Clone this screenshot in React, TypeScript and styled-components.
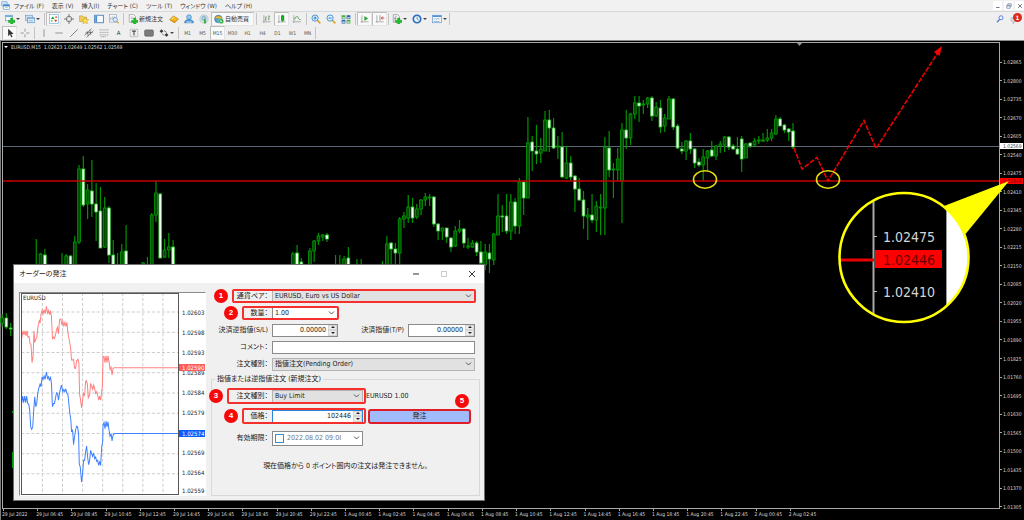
import React from "react";
import styled, { createGlobalStyle, css } from "styled-components";

const UI_FONT = `"DejaVu Sans Condensed", "DejaVu Sans", "Noto Sans CJK JP", sans-serif`;

const GlobalStyle = createGlobalStyle`
  *, *::before, *::after { box-sizing: border-box; }
  body { margin: 0; background: #000; font-family: ${UI_FONT}; font-feature-settings: "palt"; }
  button, input, select { font-family: inherit; font-feature-settings: inherit; color: inherit; margin: 0; }
`;

/* ---------- shell ---------- */

const Shell = styled.div`
  display: flex;
  flex-direction: column;
  min-height: 100vh;
  color: #333;
`;

const MenuBar = styled.header`
  display: flex;
  align-items: center;
  height: 12px;
  padding: 0 0 0 1px;
  background: #f1f1f1;
  border-bottom: 1px solid #d8d8d8;
`;

const MenuList = styled.nav`
  display: flex;
  gap: 8px;
  margin-left: 4px;
  flex: 1;
`;

const MenuItem = styled.button`
  border: 0;
  padding: 0;
  background: none;
  font-size: 6px;
  line-height: 10px;
  white-space: nowrap;
`;

const WindowButtons = styled.div`
  display: flex;
  gap: 2px;
`;

const WindowButton = styled.button`
  display: flex;
  align-items: center;
  justify-content: center;
  width: 9px;
  height: 9px;
  padding: 0;
  border: 0;
  background: #fff;
`;

const ToolBar = styled.div`
  display: flex;
  align-items: stretch;
  height: 14px;
  padding-left: 2px;
  background: #efefef;
`;

const ToolEnd = styled.div`
  display: flex;
  align-items: center;
  gap: 6px;
  margin-left: auto;
`;

const Separator = styled.span<{ $w: number }>`
  width: ${(p) => p.$w}px;
  flex: none;
  margin: 1px 0;
  background: linear-gradient(#c4c4c4, #c4c4c4) center / 1px 100% no-repeat;
`;

const ToolButton = styled.button<{ $w?: number; $pressed?: boolean }>`
  display: flex;
  align-items: center;
  justify-content: ${(p) => (p.$w ? "flex-start" : "center")};
  gap: 1px;
  width: ${(p) => p.$w ?? 15}px;
  flex: none;
  padding: 0 ${(p) => (p.$w ? 2 : 0)}px;
  border: 1px solid transparent;
  background: none;
  font-size: 6px;
  line-height: 10px;
  white-space: nowrap;
  ${(p) =>
    p.$pressed &&
    css`
      background: #f9f9f9;
      border-color: #bdbdbd #e4e4e4 #e4e4e4 #bdbdbd;
    `}
`;

const PeriodButton = styled(ToolButton)`
  font-size: 5px;
  color: #555;
`;

const Caret = styled.span`
  border: 2px solid transparent;
  border-top-color: #444;
  border-bottom: 0;
`;

const IconSvg = styled.svg<{ $size?: number }>`
  display: block;
  flex: none;
  width: ${(p) => p.$size ?? 10}px;
  height: ${(p) => p.$size ?? 10}px;
`;

const Notice = styled.button`
  position: relative;
  width: 14px;
  height: 12px;
  padding: 0;
  border: 0;
  background: none;
`;

const NoticeCount = styled.span`
  position: absolute;
  top: 0;
  right: 2px;
  width: 9px;
  height: 9px;
  border-radius: 50%;
  background: #d9291c;
  color: #fff;
  font-size: 6px;
  line-height: 9px;
  font-weight: bold;
  text-align: center;
`;

/* ---------- chart ---------- */

const ChartWindow = styled.main`
  position: relative;
  flex: 1;
  display: grid;
  grid-template-columns: 1fr 24px;
  grid-template-rows: auto 1fr;
  padding: 1px 0 0 1px;
  border-top: 1px solid #8c8c8c;
  border-left: 1px solid #7c7c7c;
  background: #000;
  color: #dcdcdc;
  font-size: 5px;
  line-height: 6px;
`;

const Plot = styled.section`
  position: relative;
  z-index: 1;
  border: 1px solid #a8a8a8;
`;

const PlotSvg = styled.svg`
  display: block;
  width: 100%;
  overflow: visible;
`;

const PlotTitle = styled.h1`
  position: absolute;
  top: 1px;
  left: 1px;
  display: flex;
  align-items: center;
  gap: 3px;
  margin: 0;
  font-size: 5px;
  font-weight: normal;
  line-height: 6px;
  white-space: pre;
  ${Caret} { border-top-color: #fff; }
`;

const PriceAxis = styled.ol`
  position: relative;
  grid-row: 1 / 3;
  grid-column: 2;
  display: flex;
  flex-direction: column;
  justify-content: space-between;
  margin: 0;
  padding: 17px 0 10px;
  list-style: none;
`;

const PriceTick = styled.li`
  display: flex;
  align-items: center;
  gap: 1px;
  &::before {
    content: "";
    width: 2px;
    height: 1px;
    background: #a8a8a8;
  }
`;

const PriceTag = styled.li<{ $bg: string; $fg: string }>`
  position: absolute;
  left: 0;
  width: 23px;
  padding-left: 3px;
  transform: translateY(-50%);
  background: ${(p) => p.$bg};
  color: ${(p) => p.$fg};
`;

const TimeAxis = styled.ol`
  display: grid;
  grid-template-columns: repeat(24, 1fr);
  margin: 0;
  padding: 0 177px 0 0;
  list-style: none;
`;

const TimeTick = styled.li`
  white-space: nowrap;
  &::before {
    content: "";
    display: block;
    width: 1px;
    height: 2px;
    margin-left: 1px;
    background: #a8a8a8;
  }
`;

/* ---------- order dialog ---------- */

const Dialog = styled.section`
  position: absolute;
  z-index: 2;
  left: 12px;
  bottom: 19px;
  width: 472px;
  border: 1px solid #6f6f6f;
  background: #f0f0f0;
  color: #222;
  font-size: 7px;
  line-height: 8px;
`;

const DialogBar = styled.header`
  display: flex;
  align-items: center;
  height: 18px;
  padding: 0 8px 0 5px;
  background: #fff;
`;

const DialogTitle = styled.h2`
  flex: 1;
  margin: 0;
  font-size: 7px;
  font-weight: normal;
  line-height: 8px;
`;

const DialogButton = styled.button`
  display: flex;
  justify-content: center;
  width: 8px;
  margin-left: 20px;
  padding: 0;
  border: 0;
  background: none;
`;

const DialogBody = styled.div`
  display: flex;
  gap: 5px;
  padding: 6px 4px 4px 5px;
`;

const TickPanel = styled.div`
  position: relative;
  display: flex;
  flex: none;
  width: 187px;
  margin-top: 3px;
  border: 1px solid #fff;
  border-top-color: #8a8a8a;
  border-left-color: #8a8a8a;
  background: #fff;
`;

const TickPlot = styled.div`
  position: relative;
  flex: 1;
  margin: 0 0 0 1px;
  border: 1px solid #555;
`;

const TickSvg = styled.svg`
  display: block;
  width: 100%;
`;

const TickName = styled.span`
  position: absolute;
  top: 0;
  left: 1px;
  font-size: 6px;
`;

const TickScale = styled.ol`
  width: 26px;
  margin: 0;
  padding: 10px 0 0;
  list-style: none;
  font-size: 6px;
  line-height: 20px;
`;

const TickLevel = styled.li<{ $last?: boolean }>`
  padding-left: 3px;
  ${(p) =>
    p.$last &&
    css`
      padding-top: 4px;
      line-height: 8px;
    `}
`;

const QuoteTag = styled.span<{ $top: number; $bg: string }>`
  position: absolute;
  top: ${(p) => p.$top}px;
  right: 0;
  width: 26px;
  padding-left: 3px;
  background: ${(p) => p.$bg};
  color: #fff;
  font-size: 6px;
  line-height: 7px;
`;

const Form = styled.form`
  display: flex;
  flex: 1;
  flex-direction: column;
  gap: 3px;
  min-width: 0;
`;

const Row = styled.div<{ $h?: number }>`
  position: relative;
  display: flex;
  align-items: center;
  flex: none;
  height: ${(p) => p.$h ?? 14}px;
  padding-right: 5px;
`;

const Label = styled.label<{ $w?: number }>`
  width: ${(p) => p.$w ?? 61}px;
  flex: none;
  padding-right: 4px;
  text-align: right;
  white-space: nowrap;
`;

const Mark = styled.span<{ $left: number; $width: number }>`
  position: absolute;
  z-index: 1;
  top: 0;
  bottom: 0;
  left: ${(p) => p.$left}px;
  width: ${(p) => p.$width}px;
  border: 2px solid #f5302c;
  border-radius: 2px;
  pointer-events: none;
`;

const Badge = styled.b<{ $corner?: boolean }>`
  position: absolute;
  left: -20px;
  top: calc(50% - 7px);
  width: 14px;
  height: 14px;
  border-radius: 50%;
  background: #f80808;
  color: #fff;
  font: bold 8px/14px "Liberation Sans", Arial, sans-serif;
  text-align: center;
  ${(p) =>
    p.$corner &&
    css`
      left: auto;
      right: 0;
      top: -17px;
    `}
`;

const Field = styled.div<{ $w?: number; $tone?: "grey" | "focus" }>`
  display: flex;
  align-items: center;
  flex: ${(p) => (p.$w ? "none" : "1")};
  width: ${(p) => (p.$w ? p.$w + "px" : "auto")};
  min-width: 0;
  height: 13px;
  border: 1px solid ${(p) => (p.$tone === "focus" ? "#2a86d8" : p.$tone === "grey" ? "#b4b4b4" : "#8a8a8a")};
  background: ${(p) => (p.$tone === "grey" ? "#e1e1e1" : "#fff")};
  position: relative;
`;

const DateField = styled(Field)`
  height: 15px;
  padding-right: 19px;
`;

const Input = styled.input<{ $right?: boolean; $muted?: boolean }>`
  flex: 1;
  width: 0;
  min-width: 0;
  height: 100%;
  padding: 0 2px;
  border: 0;
  outline: 0;
  background: none;
  font-size: 7px;
  line-height: 8px;
  text-align: ${(p) => (p.$right ? "right" : "left")};
  ${(p) => p.$muted && "color: #777;"}
`;

const Select = styled.select`
  appearance: none;
  width: 100%;
  height: 100%;
  padding: 0 12px 0 2px;
  border: 0;
  outline: 0;
  background: none;
  font-size: 7px;
  line-height: 8px;
`;

const Chevron = styled.svg`
  position: absolute;
  right: 2px;
  top: calc(50% - 2px);
  width: 7px;
  height: 4px;
  fill: none;
  stroke: #555;
  pointer-events: none;
`;

const Stepper = styled.span`
  display: flex;
  flex-direction: column;
  flex: none;
  width: 9px;
  height: 100%;
  background: #ececec;
`;

const Step = styled.button`
  display: flex;
  align-items: center;
  justify-content: center;
  flex: 1;
  padding: 0;
  border: 1px solid #d4d4d4;
  background: none;
`;

const StepArrow = styled.svg`
  display: block;
  flex: none;
  width: 4px;
  height: 2px;
  fill: #222;
`;

const Group = styled.fieldset`
  display: flex;
  flex: 1;
  flex-direction: column;
  gap: 4px;
  min-width: 0;
  margin: 1px 0 0;
  padding: 5px 0 0;
  border: 1px solid #d8d8d8;
`;

const Legend = styled.legend`
  margin-left: 3px;
  padding: 0 2px;
`;

const Check = styled.input`
  appearance: none;
  width: 9px;
  height: 9px;
  flex: none;
  margin: 0 1px 0 2px;
  border: 1px solid #3c8ad0;
  background: #fff;
`;

const Summary = styled.span`
  padding-left: 3px;
`;

const Submit = styled.button`
  position: relative;
  flex: 1;
  height: 15px;
  margin: 0 3px 0 5px;
  padding: 0;
  border: 2px solid #e01c28;
  border-radius: 3px;
  background: #a0bcfc;
  font-size: 7px;
  line-height: 8px;
`;

const Hint = styled.p`
  margin: 10px 0 0;
  text-align: center;
`;

/* ---------- data ---------- */

const PRICES = Array.from({ length: 25 }, (_, i) => ((102865 - 65 * i) / 100000).toFixed(5));

const TIMES = [
  "29 Jul 2022",
  ...["06", "08", "10", "12", "14", "16", "18", "20", "22"].map((h) => `29 Jul ${h}:45`),
  ...["00", "02", "04", "06", "08", "10", "12", "14", "16", "18", "20", "22"].map((h) => `1 Aug ${h}:45`),
  "2 Aug 00:45",
  "2 Aug 02:45",
];

// index, high, low, body top, body bottom, direction (1 = up, 0 = down)
type Candle = [number, number, number, number, number, 0 | 1];
const CANDLES: Candle[] = [
  [-8, 314, 327, 318, 323, 1], [-7, 313, 329, 318, 327, 0], [-6, 323, 336, 328, 329, 0],
  [0, 239, 270, 266, 270, 1], [1, 253, 270, 254, 270, 1], [2, 249, 270, 255, 270, 0],
  [6, 253, 270, 266, 270, 1], [7, 254, 270, 256, 270, 1], [8, 255, 270, 256, 270, 0],
  [9, 236, 270, 242, 270, 1], [10, 165, 244, 169, 242, 1], [11, 156, 207, 169, 205, 0],
  [12, 184, 219, 190, 204, 1], [13, 160, 217, 191, 204, 0], [14, 183, 241, 204, 212, 0],
  [15, 187, 248, 211, 248, 0], [16, 197, 248, 208, 247, 1], [17, 206, 263, 208, 255, 0],
  [18, 240, 270, 255, 270, 0], [19, 253, 270, 266, 270, 1], [20, 244, 270, 252, 270, 1],
  [21, 225, 270, 251, 270, 0], [25, 262, 270, 263, 270, 1], [26, 257, 270, 266, 270, 1],
  [27, 213, 270, 215, 270, 1], [28, 181, 222, 193, 215, 1], [29, 193, 258, 194, 258, 0],
  [30, 239, 258, 250, 257, 1], [31, 233, 258, 247, 250, 1], [32, 240, 270, 247, 270, 0],
  [60, 252, 270, 254, 270, 1], [61, 245, 270, 253, 270, 0], [62, 258, 270, 262, 270, 0],
  [64, 248, 270, 251, 270, 1], [65, 240, 262, 241, 251, 1], [66, 233, 245, 236, 241, 1],
  [67, 234, 241, 235, 237, 1], [68, 233, 242, 235, 239, 0], [70, 255, 270, 266, 270, 1],
  [71, 255, 270, 266, 270, 1], [72, 256, 270, 259, 270, 1], [73, 247, 270, 258, 270, 0],
  [75, 259, 270, 266, 270, 1], [76, 259, 270, 266, 270, 1], [81, 261, 270, 266, 270, 1],
  [82, 236, 270, 244, 270, 1], [83, 242, 270, 243, 249, 0], [84, 243, 270, 249, 253, 0],
  [85, 217, 270, 219, 253, 1], [86, 212, 228, 216, 219, 1], [87, 195, 223, 207, 218, 1],
  [88, 198, 223, 207, 218, 0], [89, 204, 219, 209, 217, 1], [90, 199, 215, 200, 209, 1],
  [91, 193, 206, 197, 200, 1], [92, 194, 206, 197, 198, 1], [93, 196, 227, 197, 224, 0],
  [94, 223, 240, 224, 231, 0], [95, 228, 240, 228, 231, 1], [96, 228, 243, 228, 237, 0],
  [97, 237, 252, 238, 247, 0], [98, 226, 247, 231, 246, 1], [99, 220, 233, 229, 231, 1],
  [100, 228, 248, 229, 243, 0], [101, 238, 249, 246, 247, 1], [102, 240, 248, 243, 247, 1],
  [103, 241, 256, 243, 252, 0], [104, 241, 268, 252, 263, 0], [105, 244, 270, 252, 265, 1],
  [106, 244, 273, 253, 259, 0], [107, 233, 265, 234, 260, 1], [108, 194, 235, 216, 235, 1],
  [109, 205, 232, 216, 217, 0], [110, 194, 234, 216, 231, 0], [111, 194, 240, 202, 231, 1],
  [112, 198, 234, 202, 226, 0], [113, 178, 234, 182, 226, 1], [114, 182, 215, 182, 198, 0],
  [115, 117, 198, 143, 198, 1], [116, 136, 171, 142, 151, 0], [117, 125, 164, 151, 154, 0],
  [118, 138, 163, 149, 153, 1], [119, 111, 151, 120, 151, 1], [120, 110, 152, 120, 128, 0],
  [121, 118, 149, 128, 148, 0], [122, 136, 159, 146, 147, 1], [123, 132, 178, 147, 177, 0],
  [124, 146, 179, 163, 178, 1], [125, 156, 180, 163, 177, 0], [126, 175, 212, 176, 189, 0],
  [127, 178, 201, 189, 200, 0], [128, 191, 229, 200, 216, 0], [129, 208, 240, 215, 217, 1],
  [130, 194, 223, 215, 220, 0], [131, 201, 232, 206, 220, 1], [132, 194, 235, 207, 208, 1],
  [133, 137, 235, 147, 208, 1], [134, 131, 177, 148, 170, 0], [135, 163, 198, 169, 170, 1],
  [136, 148, 181, 159, 170, 1], [137, 123, 223, 130, 181, 1], [138, 110, 149, 130, 138, 0],
  [139, 113, 145, 114, 138, 1], [140, 96, 119, 103, 114, 1], [141, 96, 122, 103, 106, 0],
  [142, 100, 114, 104, 105, 1], [143, 97, 108, 98, 104, 1], [144, 96, 121, 98, 116, 0],
  [145, 102, 117, 107, 116, 1], [146, 100, 133, 108, 127, 0], [147, 114, 132, 118, 126, 1],
  [148, 96, 119, 99, 119, 1], [149, 98, 130, 99, 127, 0], [150, 124, 149, 126, 148, 0],
  [151, 142, 154, 149, 151, 0], [152, 140, 160, 141, 151, 1], [153, 133, 154, 141, 149, 0],
  [154, 148, 168, 149, 163, 0], [155, 158, 167, 162, 165, 0], [156, 149, 181, 157, 165, 1],
  [157, 150, 171, 151, 158, 1], [158, 141, 157, 150, 156, 0], [159, 145, 160, 146, 156, 1],
  [160, 141, 153, 144, 146, 1], [161, 136, 152, 137, 145, 1], [162, 136, 150, 137, 147, 0],
  [163, 144, 150, 146, 149, 0], [164, 137, 155, 149, 154, 0], [165, 136, 172, 139, 159, 0],
  [166, 143, 158, 144, 158, 1], [167, 143, 148, 143, 146, 0], [168, 138, 147, 141, 145, 1],
  [169, 136, 144, 140, 141, 1], [170, 133, 142, 140, 141, 1], [171, 129, 142, 138, 140, 1],
  [172, 129, 141, 133, 138, 1], [173, 115, 135, 119, 134, 1], [174, 117, 126, 119, 126, 0],
  [175, 124, 133, 125, 130, 0], [176, 128, 141, 129, 132, 0], [177, 123, 149, 131, 147, 0],
];

const ASK =
  "35,235 39,213 42,225 45,213 48,228 51,213 54,232 57,230 60,250 63,255 66,308 69,290 72,213 74,248 77,238 80,235 83,205 86,190 88,180 90,190 93,162 96,152 99,162 102,150 105,162 109,140 112,160 115,152 118,165 121,153 124,170 127,236 130,232 133,236 136,225 139,210 142,202 145,222 148,180 152,178 155,195 158,185 161,198 164,188 167,200 170,188 173,218 177,240 181,262 184,300 187,300 190,298 193,325 196,325 199,302 203,298 206,310 208,402 211,420 214,443 217,420 220,400 223,405 226,365 228,362 231,370 234,413 238,405 241,370 244,378 247,388 250,375 253,385 256,400 259,395 262,405 265,420 268,408 271,420 274,395 276,380 278,290 281,290 284,308 287,288 290,308 293,288 296,305 299,328 302,322 305,345 308,325 312,323 506,323";
const BID =
  "35,430 38,408 41,428 44,408 47,428 50,408 53,430 56,432 59,450 62,500 65,507 68,500 71,450 74,410 77,440 80,430 83,400 86,385 90,372 93,380 96,350 99,358 102,348 105,358 109,336 112,355 115,350 118,362 121,350 124,370 127,440 130,430 133,430 136,415 139,398 142,400 145,420 148,400 151,385 154,375 158,395 161,388 164,395 167,388 170,400 173,402 176,430 179,460 182,480 184,515 187,508 190,553 193,530 196,510 199,498 202,500 205,520 207,610 210,620 214,665 217,640 220,600 223,600 226,575 229,557 232,590 235,613 238,600 241,570 244,580 247,588 250,578 253,595 256,590 259,603 262,600 265,615 268,605 271,615 274,560 277,545 278,495 281,487 284,505 287,483 290,500 293,485 296,510 299,528 302,520 305,542 308,525 312,520 506,520";

const LEVELS = ["1.02603", "1.02598", "1.02593", "1.02589", "1.02584", "1.02579", "1.02574", "1.02569", "1.02564", "1.02559"];

/* ---------- icons, drawn on a 16 unit square ---------- */

const plus = <path d="M9 6.500h3.500V10H16v3.500h-3.500V16H9v-2.500H5.500V10H9z" fill="#1fc02c" stroke="#0c8a18" strokeWidth=".6" />;
const axes = <path d="M3 2v12M1 12.500h13" stroke="#888" fill="none" />;

const ICONS: Record<string, React.ReactNode> = {
  app: (
    <>
      <rect x="1" y="1" width="10" height="8" rx="1" fill="#cfe4fa" stroke="#5b9bd8" />
      <rect x="4" y="6" width="11" height="9" rx="1" fill="#fff" stroke="#3f86cc" />
      <path d="M4 8h11" stroke="#3f86cc" strokeWidth="3" />
      <path d="M6 13l2-2 2 1 3-2" stroke="#6aa84f" fill="none" />
    </>
  ),
  newChart: (
    <>
      <rect x="1" y="2" width="11" height="9" fill="#eef5fb" stroke="#6f97b8" />
      <path d="M1 3.500h11" stroke="#4f9fd0" strokeWidth="2" />
      {plus}
    </>
  ),
  profiles: (
    <>
      <rect x="1" y="2" width="11" height="8" fill="#cfe0f0" stroke="#6a98c5" />
      <rect x="4" y="6" width="11" height="8" fill="#eaf3fb" stroke="#4a86c5" />
      <path d="M4 7.500h11M6 11h7" stroke="#4a86c5" />
    </>
  ),
  market: (
    <>
      <rect x="1" y="1" width="14" height="14" fill="#fff" stroke="#6fa9e0" />
      <path d="M3 8l3-4 3 4z" fill="#19a02c" />
      <path d="M8 9l3 4 2-4z" fill="#e03a20" />
      <path d="M3 11h3" stroke="#19a02c" strokeWidth="1.500" />
      <path d="M10 5h3" stroke="#e03a20" strokeWidth="2" />
    </>
  ),
  crosshair: (
    <>
      <circle cx="8" cy="8" r="4.500" fill="none" stroke="#666" strokeWidth="1.200" />
      <path d="M8 0v6M8 10v6M0 8h6M10 8h6" stroke="#666" strokeWidth="1.300" />
    </>
  ),
  navigator: (
    <>
      <path d="M1 3h5l1 2h5v7H1z" fill="#f5cf5a" stroke="#b08a20" strokeWidth=".8" />
      <path d="M10 5l1.700 3.500 3.800.5-2.800 2.600.7 3.900-3.400-1.900-3.400 1.900.7-3.900L4.500 9l3.800-.5z" fill="#ffe24d" stroke="#b98a10" strokeWidth=".7" />
    </>
  ),
  terminal: (
    <>
      <rect x="1" y="2" width="14" height="12" fill="#f6fafd" stroke="#3f77b5" strokeWidth="1.300" />
      <rect x="2" y="3" width="3" height="10" fill="#4a8fd0" />
    </>
  ),
  tester: (
    <>
      <rect x="1" y="1" width="11" height="12" fill="#f2f6fa" stroke="#90a5ba" />
      <path d="M3 10V5M6 9V4M9 8V4" stroke="#889" />
      <circle cx="10" cy="9" r="3.500" fill="#d6ecfb" stroke="#4f87b8" />
      <path d="M12.500 12l3 3" stroke="#d9a520" strokeWidth="2" />
    </>
  ),
  order: (
    <>
      <path d="M2 1h7l3 3v9H2z" fill="#fff" stroke="#888" />
      <path d="M4 5h5M4 7h5" stroke="#999" />
      {plus}
    </>
  ),
  editor: (
    <>
      <path d="M1 9l6-6 8 5-6 6z" fill="#f3b81e" stroke="#b07a10" />
      <path d="M1 9l8 3v2zM15 8l-6 4v2z" fill="#c98a12" />
      <path d="M5 8l3-3" stroke="#fff0b0" strokeWidth="1.500" />
    </>
  ),
  community: (
    <>
      <circle cx="8" cy="5" r="3.800" fill="#8fc8f2" stroke="#2f80c5" />
      <path d="M1 14c0-4 3-5 7-5s7 1 7 5z" fill="#4f9fe0" stroke="#2268a8" />
      <path d="M4 13h8" stroke="#d8ecfb" strokeWidth="1.500" />
    </>
  ),
  signals: (
    <>
      <circle cx="8" cy="8" r="6.500" fill="#dce7ee" stroke="#9fb6c6" />
      <circle cx="8" cy="7" r="3.500" fill="#a8cbe2" stroke="#6c98b8" />
      <path d="M8 7c3 1 4 4 3 8H8z" fill="#3cb043" />
    </>
  ),
  auto: (
    <>
      <circle cx="7" cy="8" r="6" fill="#4fa3dc" stroke="#2a6ea8" />
      <path d="M1 7c2-5 10-5 12 0z" fill="#e8c23c" stroke="#9a7d18" strokeWidth=".7" />
      <circle cx="11.500" cy="11.500" r="4" fill="#22ab35" stroke="#fff" strokeWidth=".6" />
      <path d="M10.300 9.500v4l3.200-2z" fill="#fff" />
    </>
  ),
  bars: (
    <>
      {axes}
      <path d="M6 4v7M6 9h-1.500M6 5h1.500M11 2v8M11 8H9.500M11 4h1.500" stroke="#5b8a5b" strokeWidth="1.200" />
    </>
  ),
  candles: (
    <>
      {axes}
      <path d="M9 1v12" stroke="#0b7d18" />
      <rect x="7" y="3" width="4" height="7" fill="#19b22c" stroke="#0b7d18" />
    </>
  ),
  line: (
    <>
      {axes}
      <path d="M4 9c2-6 5-6 6-3s2 3 4 3" stroke="#3d9a46" strokeWidth="1.300" fill="none" />
    </>
  ),
  zoomIn: (
    <>
      <path d="M10 10l5 5" stroke="#d9a520" strokeWidth="2.600" />
      <circle cx="6.500" cy="6.500" r="5" fill="#d9effc" stroke="#3c8ccc" strokeWidth="1.400" />
      <path d="M4 6.500h5M6.500 4v5" stroke="#2f76b8" strokeWidth="1.400" />
    </>
  ),
  zoomOut: (
    <>
      <path d="M10 10l5 5" stroke="#d9a520" strokeWidth="2.600" />
      <circle cx="6.500" cy="6.500" r="5" fill="#d9effc" stroke="#3c8ccc" strokeWidth="1.400" />
      <path d="M4 6.500h5" stroke="#2f76b8" strokeWidth="1.400" />
    </>
  ),
  tile: (
    <>
      <path d="M1 2h6v6H1zM9 9h6v6H9z" fill="#46ab3a" />
      <path d="M9 2h6v6H9zM1 9h6v6H1z" fill="#2f62b8" />
      <path d="M2 5h4v2H2zM10 5h4v2h-4zM2 12h4v2H2zM10 12h4v2h-4z" fill="#dfeefa" />
    </>
  ),
  scroll: (
    <>
      {axes}
      <path d="M7 3l6 4-6 4z" fill="#2aa63a" />
    </>
  ),
  shift: (
    <>
      {axes}
      <path d="M8 2v9" stroke="#666" />
      <path d="M15 6.500h-5M12.500 4L10 6.500 12.500 9" stroke="#c8402a" strokeWidth="1.400" fill="none" />
    </>
  ),
  indicators: (
    <>
      <path d="M2 1h7l3 3v9H2z" fill="#f2f2f2" stroke="#888" />
      <path d="M7 4c-2 0-2 1-2 3v4M4 7h3" stroke="#667" fill="none" />
      {plus}
    </>
  ),
  clock: (
    <>
      <circle cx="8" cy="8" r="6" fill="#e6f2fc" stroke="#2c6fc0" strokeWidth="2.600" />
      <path d="M8 4.500V8l2.500 1.500" stroke="#456" fill="none" />
    </>
  ),
  template: (
    <>
      <rect x="1" y="2" width="14" height="12" fill="#edf5fc" stroke="#5b93cc" />
      <path d="M1 3.500h14" stroke="#4f8fd0" strokeWidth="2.500" />
      <path d="M3 9l2-2 2 2 2-2 3 1M3 12h9" stroke="#7a94ad" fill="none" />
    </>
  ),
  cursor: <path d="M5 1v12l3-3 2 5 2-1-2-4.500h4z" fill="#333" />,
  cross: <path d="M8 1v5M8 10v5M1 8h5M10 8h5" stroke="#888" strokeWidth="1.300" />,
  vline: <path d="M8 2v12" stroke="#888" strokeWidth="1.400" />,
  hline: <path d="M2 8h12" stroke="#888" strokeWidth="1.400" />,
  trend: <path d="M2 14L14 2" stroke="#777" strokeWidth="1.400" />,
  channel: <path d="M1 12L12 1M4 15L15 4M5 5l2 8M9 3l2 8M2 8l12-1" stroke="#555" strokeWidth="1.100" />,
  fibo: <path d="M1 3h14M1 7h14M1 11h14M3 14h8" stroke="#888" strokeWidth="1.200" strokeDasharray="2 1" />,
  textLabel: (
    <>
      <rect x="2" y="2" width="12" height="12" fill="none" stroke="#888" strokeDasharray="2 1" />
      <path d="M5 5h6M8 5v7" stroke="#444" strokeWidth="1.700" />
    </>
  ),
  rect: <rect x="1" y="3" width="14" height="10" rx="2" fill="#7b7b7b" stroke="#5a5a5a" />,
  arrows: (
    <>
      <path d="M1 5l3-3 3 3-3 3zM9 11l3-3 3 3-3 3z" fill="#333" />
      <path d="M5 9l3 3M8 4l4 3" stroke="#555" strokeWidth="1.400" />
    </>
  ),
  search: (
    <>
      <circle cx="10" cy="5.500" r="4" fill="#eef5ff" stroke="#4c78d8" strokeWidth="1.800" />
      <path d="M7 9l-5 5.500" stroke="#4c78d8" strokeWidth="2.400" />
    </>
  ),
  chat: <path d="M2 6h9c2 0 3 1 3 3s-1 3-3 3H8l-3 4v-4H3c-2 0-2-6-1-6z" fill="#ddd" stroke="#aaa" />,
  min: <path d="M3 12h9" stroke="#667" strokeWidth="2.400" />,
  restore: <path d="M5 6V2h9v7h-3M2 6h9v8H2zM2 7.500h9" stroke="#667799" strokeWidth="1.800" fill="none" />,
  close: <path d="M3 3l10 10M13 3L3 13" stroke="#667" strokeWidth="2.400" />,
};

const Icon = ({ name, size }: { name: string; size?: number }) => (
  <IconSvg viewBox="0 0 16 16" $size={size} aria-hidden="true">
    {ICONS[name]}
  </IconSvg>
);

const Tool = ({ icon, pressed }: { icon: string; pressed?: boolean }) => (
  <ToolButton type="button" aria-label={icon} $pressed={pressed}>
    <Icon name={icon} />
  </ToolButton>
);

const DropTool = ({ icon }: { icon: string }) => (
  <ToolButton type="button" aria-label={icon} $w={20}>
    <Icon name={icon} />
    <Caret />
  </ToolButton>
);

/* ---------- parts ---------- */

const MENUS = ["ファイル (F)", "表示 (V)", "挿入(I)", "チャート (C)", "ツール (T)", "ウィンドウ (W)", "ヘルプ (H)"];
const PERIODS = ["M1", "M5", "M15", "M30", "H1", "H4", "D1", "W1", "MN"];

const candleX = (i: number) => 36.3 + 4.275 * i;

const CandleShape = ({ c: [i, high, low, top, bottom, up] }: { c: Candle }) => {
  const x = candleX(i);
  return (
    <>
      <path d={`M${x} ${high}V${low}`} stroke="#009400" strokeWidth="1.200" />
      <rect
        x={x - 1.4}
        y={top}
        width="2.800"
        height={Math.max(bottom - top, 0.6)}
        fill={up ? "#004a00" : "#f0fff0"}
        stroke={up ? "#00a000" : "#30c030"}
        strokeWidth=".8"
      />
    </>
  );
};

const Chart = () => (
  <PlotSvg viewBox="3 43 996 465" role="img" aria-label="EURUSD M15">
    <defs>
      <clipPath id="lens">
        <circle cx="904" cy="257.500" r="64" />
      </clipPath>
    </defs>
    <path d="M3 146.500H999" stroke="#5c6a78" />
    {CANDLES.map((c) => (
      <CandleShape key={c[0]} c={c} />
    ))}
    <path d="M12.500 411v2M12.500 452v16" stroke="#009400" />
    <path d="M3 181H999" stroke="#c80000" strokeWidth="1.500" />
    <path d="M797 43h5l-2.500 3z" fill="#8a96a4" />
    <path
      d="M794 148L802 169L817 157.500L828 181L864 120.500L876 148.500L937 54"
      fill="none"
      stroke="#ee0000"
      strokeWidth="1.600"
      strokeDasharray="5 1.500"
    />
    <path d="M942 46l-8 6 5.500 4z" fill="#ff0000" />
    <g fill="none" stroke="#e6dc10" strokeWidth="1.600">
      <ellipse cx="705" cy="179.500" rx="11.500" ry="8.800" />
      <ellipse cx="828" cy="179.500" rx="11.500" ry="8.800" />
    </g>
    <path d="M944 206L1009 181L965.500 234z" fill="#ffff00" />
    <circle cx="904" cy="257.500" r="64" fill="#000" />
    <g clipPath="url(#lens)">
      <rect x="947" y="190" width="30" height="140" fill="#fff" />
      <path d="M946.500 190v140" stroke="#999" />
      <path d="M873.500 190v140" stroke="#a8a8a8" strokeWidth="2" />
      <path d="M874 236.500h3M874 291.500h3" stroke="#c8c8c8" />
      <path d="M838 260h36" stroke="#e80000" strokeWidth="3" />
      <rect x="875" y="250" width="67" height="18" fill="#ff0000" />
    </g>
    <g fontFamily={UI_FONT} fontSize="14" fill="#d4d4d4">
      <text x="883" y="242">1.02475</text>
      <text x="883" y="265" fill="#6a0000">1.02446</text>
      <text x="883" y="297">1.02410</text>
    </g>
    <circle cx="904" cy="257.500" r="64.500" fill="none" stroke="#ffff00" strokeWidth="2.600" />
  </PlotSvg>
);

// Height of a price within the axis, as a share of its full height.
const axisTop = (price: number) => ((19.7 + ((1.02865 - price) / 0.00065) * 18.57) / 478) * 100;

const SelectArrow = () => (
  <Chevron viewBox="0 0 7 4">
    <path d="M1 .5l2.500 2.500 2.500-2.500" />
  </Chevron>
);

const Steps = () => (
  <Stepper>
    <Step type="button" aria-label="up">
      <StepArrow viewBox="0 0 4 2"><path d="M0 2l2-2 2 2z" /></StepArrow>
    </Step>
    <Step type="button" aria-label="down">
      <StepArrow viewBox="0 0 4 2"><path d="M0 0l2 2 2-2z" /></StepArrow>
    </Step>
  </Stepper>
);

const OrderDialog = () => (
  <Dialog aria-label="オーダーの発注">
    <DialogBar>
      <DialogTitle>オーダーの発注</DialogTitle>
      <DialogButton type="button" aria-label="minimize">
        <IconSvg viewBox="0 0 8 8" $size={8}><path d="M1 4h6" stroke="#333" /></IconSvg>
      </DialogButton>
      <DialogButton type="button" aria-label="maximize">
        <IconSvg viewBox="0 0 8 8" $size={8}><rect x="1.500" y="1.500" width="5" height="5" fill="none" stroke="#ccc" /></IconSvg>
      </DialogButton>
      <DialogButton type="button" aria-label="close">
        <IconSvg viewBox="0 0 8 8" $size={8}><path d="M1 1l6 6M7 1L1 7" stroke="#333" /></IconSvg>
      </DialogButton>
    </DialogBar>
    <DialogBody>
      <TickPanel>
        <TickPlot>
          <TickSvg viewBox="36 103 466 596">
            <path
              d="M97 100V702M157 100V702M217 100V702M277 100V702M337 100V702M397 100V702M457 100V702M34 157H506M34 217H506M34 278H506M34 338H506M34 399H506M34 459H506M34 520H506M34 580H506M34 640H506"
              stroke="#ccc"
              strokeWidth="3"
              strokeDasharray="9 6"
            />
            <polyline points={ASK} fill="none" stroke="#ff8080" strokeWidth="3" />
            <polyline points={BID} fill="none" stroke="#3f80ff" strokeWidth="3" />
          </TickSvg>
          <TickName>EURUSD</TickName>
        </TickPlot>
        <TickScale>
          {LEVELS.map((l, i) => (
            <TickLevel key={l} $last={i === LEVELS.length - 1}>{l}</TickLevel>
          ))}
        </TickScale>
        <QuoteTag $top={71} $bg="#ff5a5a">1.02590</QuoteTag>
        <QuoteTag $top={137} $bg="#0a5cff">1.02574</QuoteTag>
      </TickPanel>
      <Form onSubmit={(e) => e.preventDefault()}>
        <Row>
          <Label htmlFor="symbol">通貨ペア：</Label>
          <Field $tone="grey">
            <Select id="symbol"><option>EURUSD, Euro vs US Dollar</option></Select>
            <SelectArrow />
          </Field>
          <Mark $left={21} $width={244}><Badge>1</Badge></Mark>
        </Row>
        <Row>
          <Label htmlFor="volume">数量：</Label>
          <Field $w={66}>
            <Input id="volume" defaultValue="1.00" />
            <SelectArrow />
          </Field>
          <Mark $left={31} $width={97}><Badge>2</Badge></Mark>
        </Row>
        <Row>
          <Label htmlFor="sl">決済逆指値(S/L)</Label>
          <Field $w={66}>
            <Input id="sl" defaultValue="0.00000" $right />
            <Steps />
          </Field>
          <Label htmlFor="tp" $w={70}>決済指値(T/P)</Label>
          <Field>
            <Input id="tp" defaultValue="0.00000" $right />
            <Steps />
          </Field>
        </Row>
        <Row>
          <Label htmlFor="comment">コメント：</Label>
          <Field><Input id="comment" /></Field>
        </Row>
        <Row>
          <Label htmlFor="kind">注文種別：</Label>
          <Field $tone="grey">
            <Select id="kind"><option>指値注文(Pending Order)</option></Select>
            <SelectArrow />
          </Field>
        </Row>
        <Group>
          <Legend>指値または逆指値注文 (新規注文)</Legend>
          <Row $h={16}>
            <Label htmlFor="pending" $w={60}>注文種別：</Label>
            <Field $tone="grey" $w={91}>
              <Select id="pending"><option>Buy Limit</option></Select>
              <SelectArrow />
            </Field>
            <Summary>EURUSD 1.00</Summary>
            <Mark $left={15} $width={139}><Badge>3</Badge></Mark>
          </Row>
          <Row $h={16}>
            <Label htmlFor="price" $w={60}>価格：</Label>
            <Field $tone="focus" $w={91}>
              <Input id="price" defaultValue="102446" $right />
              <Steps />
            </Field>
            <Submit type="submit">
              発注
              <Badge $corner>5</Badge>
            </Submit>
            <Mark $left={30} $width={124}><Badge>4</Badge></Mark>
          </Row>
          <Row $h={20}>
            <Label htmlFor="expiry" $w={60}>有効期限：</Label>
            <DateField $w={91}>
              <Check type="checkbox" aria-label="有効期限" />
              <Input id="expiry" defaultValue="2022.08.02 09:08" $muted />
              <SelectArrow />
            </DateField>
          </Row>
          <Hint>現在価格から 0 ポイント圏内の注文は発注できません。</Hint>
        </Group>
      </Form>
    </DialogBody>
  </Dialog>
);

export default function App() {
  return (
    <Shell>
      <GlobalStyle />
      <MenuBar>
        <Icon name="app" size={9} />
        <MenuList>
          {MENUS.map((m) => (
            <MenuItem type="button" key={m}>{m}</MenuItem>
          ))}
        </MenuList>
        <WindowButtons>
          <WindowButton type="button" aria-label="minimize"><Icon name="min" size={6} /></WindowButton>
          <WindowButton type="button" aria-label="restore"><Icon name="restore" size={6} /></WindowButton>
          <WindowButton type="button" aria-label="close"><Icon name="close" size={6} /></WindowButton>
        </WindowButtons>
      </MenuBar>
      <ToolBar>
        <DropTool icon="newChart" />
        <DropTool icon="profiles" />
        <Separator $w={4} />
        <Tool icon="market" pressed />
        <Tool icon="crosshair" />
        <Tool icon="navigator" />
        <Tool icon="terminal" />
        <Tool icon="tester" />
        <Separator $w={4} />
        <ToolButton type="button" $w={41}>
          <Icon name="order" />
          新規注文
        </ToolButton>
        <Tool icon="editor" />
        <Tool icon="community" />
        <Tool icon="signals" />
        <ToolButton type="button" $w={43} $pressed>
          <Icon name="auto" />
          自動売買
        </ToolButton>
        <Separator $w={5} />
        <Tool icon="bars" />
        <Tool icon="candles" pressed />
        <Tool icon="line" />
        <Separator $w={4} />
        <Tool icon="zoomIn" />
        <Tool icon="zoomOut" />
        <Tool icon="tile" />
        <Separator $w={4} />
        <Tool icon="scroll" pressed />
        <Tool icon="shift" pressed />
        <Separator $w={2} />
        <DropTool icon="indicators" />
        <DropTool icon="clock" />
        <DropTool icon="template" />
        <Separator $w={1} />
        <ToolEnd>
          <Icon name="search" size={8} />
          <Notice type="button" aria-label="messages">
            <Icon name="chat" />
            <NoticeCount>1</NoticeCount>
          </Notice>
        </ToolEnd>
      </ToolBar>
      <ToolBar>
        <Tool icon="cursor" pressed />
        <Tool icon="cross" />
        <Separator $w={4} />
        <Tool icon="vline" />
        <Tool icon="hline" />
        <Tool icon="trend" />
        <Tool icon="channel" />
        <Tool icon="fibo" />
        <ToolButton type="button">A</ToolButton>
        <Tool icon="textLabel" />
        <Tool icon="rect" />
        <DropTool icon="arrows" />
        <Separator $w={4} />
        {PERIODS.map((p) => (
          <PeriodButton type="button" key={p} $pressed={p === "M15"}>{p}</PeriodButton>
        ))}
        <Separator $w={1} />
      </ToolBar>
      <ChartWindow>
        <Plot>
          <Chart />
          <PlotTitle>
            <Caret />
            {"EURUSD,M15  1.02623 1.02649 1.02562 1.02569"}
          </PlotTitle>
        </Plot>
        <PriceAxis>
          {PRICES.map((p) => (
            <PriceTick key={p}>{p}</PriceTick>
          ))}
          <PriceTag $bg="#ffffff" $fg="#444" style={{ top: `${axisTop(1.02569)}%` }}>1.02569</PriceTag>
          <PriceTag $bg="#ff0000" $fg="#7a0000" style={{ top: `${axisTop(1.02446)}%` }}>1.02446</PriceTag>
        </PriceAxis>
        <TimeAxis>
          {TIMES.map((t) => (
            <TimeTick key={t}>{t}</TimeTick>
          ))}
        </TimeAxis>
        <OrderDialog />
      </ChartWindow>
    </Shell>
  );
}
